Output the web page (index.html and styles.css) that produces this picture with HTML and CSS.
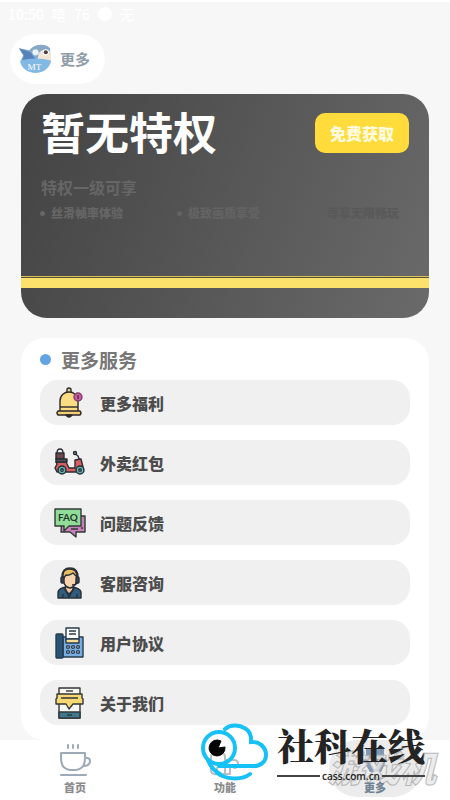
FILE: index.html
```html
<!DOCTYPE html>
<html lang="zh-CN">
<head>
  <meta charset="UTF-8" />
  <meta name="viewport" content="width=device-width, initial-scale=1" />
  <title>更多</title>
  <link rel="stylesheet" href="styles.css">
</head>
<body>
<div class="status-bar">
  <span>10:50</span>
  <span>嘻</span>
  <span>76</span>
  <span class="status-dot"></span>
  <span>无</span>
</div>

<header class="page-header">
  <h1 class="title-pill">
    <svg class="avatar" viewBox="0 0 32 32" aria-hidden="true">
      <path d="M0 5l10 2c5-6 15-7 20-2l1 14-14 3-15-5 2-5z" fill="#7fa9d6"/>
      <path d="M10 8c5-6 14-7 19-3l-9 3-4 4z" fill="#8ba6c0"/>
      <path d="M19 10c4-5 10-4 12 0v8c-5 3-10 2-13-2z" fill="#f3e5d3"/>
      <path d="M0 5l11 4 6 8-15 2 3-7z" fill="#5482b9"/>
      <circle cx="16" cy="9" r="3" fill="#e7f3fb"/>
      <circle cx="26" cy="9" r="3" fill="#fff"/>
      <circle cx="26" cy="9" r="2" fill="#493f3d"/>
      <path d="M1 17q15-4 30 0c-1 8-8 12-15 12S2 25 1 17z" fill="#82b8e4"/>
      <text x="15" y="26" class="avatar-text">MT</text>
    </svg>
    更多
  </h1>
</header>

<main>
  <section class="vip-card">
    <div class="vip-top">
      <h2>暂无特权</h2>
      <button type="button" class="get-btn">免费获取</button>
    </div>
    <p class="vip-level">特权一级可享</p>
    <ul class="perks">
      <li>丝滑帧率体验</li>
      <li>极致画质享受</li>
      <li>尊享无限畅玩</li>
    </ul>
    <div class="vip-stripe"></div>
  </section>

  <section class="services">
    <h2>更多服务</h2>
    <a class="service" href="#welfare">
      <svg viewBox="0 0 32 32" aria-hidden="true">
        <g stroke="#2c292c" stroke-width="1.4" stroke-linejoin="round">
          <path d="M13 5V2q2-2 4 0v3" fill="#e8d487"/>
          <path d="M6 25V14C6 2 24 2 24 14v11z" fill="#fbdc82"/>
          <path d="M6 20h18" fill="none"/>
          <path d="M4 24h22q2 2 0 4H4q-2-2 0-4z" fill="#f4cf72"/>
          <path d="M12 28q3 4 6 0z" fill="#2c292c"/>
          <circle cx="24" cy="10" r="4" fill="#c65a9f" stroke="#823d6d"/>
          <path d="M24 8v4" stroke="#5c2550"/>
        </g>
      </svg>
      更多福利
    </a>
    <a class="service" href="#takeout">
      <svg viewBox="0 0 32 32" aria-hidden="true">
        <g stroke="#2b2c33" stroke-width="1.4" stroke-linejoin="round">
          <path d="M2 12V6h8v6z" fill="#6d474c"/>
          <path d="M3 6q0-4 3-4t3 4M20 6l4 3 4 11M20 6l2-1" fill="none"/>
          <path d="M2 15h10l3 6h6V13l6-1 2 8-5 5H3l-2-4 2-4z" fill="#d95f62"/>
          <path d="M2 12h11v3H2z" fill="#4c5360"/>
          <circle cx="8" cy="23" r="4" fill="#58b9b7"/>
          <circle cx="26" cy="23" r="4" fill="#58b9b7"/>
          <circle cx="8" cy="23" r="1.2" fill="#d9eef0"/>
          <circle cx="26" cy="23" r="1.2" fill="#d9eef0"/>
          <circle cx="21" cy="6" r="1.5" fill="#58b9b7"/>
        </g>
      </svg>
      外卖红包
    </a>
    <a class="service" href="#feedback">
      <svg viewBox="0 0 32 32" aria-hidden="true">
        <g stroke="#303b34" stroke-width="1.4" stroke-linejoin="round">
          <path d="M8 9h23v16H22v5l-6-5H7z" fill="#ca7fbd"/>
          <path d="M1 2h26v17H15l-5 5v-5H1z" fill="#91dc99"/>
          <path d="M17 22h7M27 21h2" fill="none"/>
        </g>
        <text x="14" y="14" class="faq-text">FAQ</text>
      </svg>
      问题反馈
    </a>
    <a class="service" href="#support">
      <svg viewBox="0 0 32 32" aria-hidden="true">
        <g stroke="#292f36" stroke-width="1.4" stroke-linejoin="round">
          <path d="M4 31v-6q1-4 8-5h6q8 1 9 5v6z" fill="#315c7d"/>
          <path d="M12 19h7v4l-4 4-4-4z" fill="#f0c5a3"/>
          <path d="M9 10q0-8 7-8t7 8q0 10-7 11Q9 20 9 10z" fill="#f8d3ae"/>
          <path d="M9 12V8q0-6 7-6t7 8l-4-4q-4 3-7 2z" fill="#e9bd63"/>
          <path d="M8 10Q8 1 16 1t8 9v5q-2 3-6 3" fill="none"/>
          <rect x="7" y="10" width="3" height="6" rx="1" fill="#3b424b"/>
          <rect x="22" y="10" width="3" height="6" rx="1" fill="#3b424b"/>
          <path d="M11 21l4 9 5-9M9 27v4M23 27v4" fill="none"/>
        </g>
      </svg>
      客服咨询
    </a>
    <a class="service" href="#agreement">
      <svg viewBox="0 0 32 32" aria-hidden="true">
        <g stroke="#293b4d" stroke-width="1.4" stroke-linejoin="round">
          <path d="M9 10h20v20H9z" fill="#79addf"/>
          <path d="M12 1h13v11H12z" fill="#fff"/>
          <path d="M15 4h7M15 7h7" fill="none"/>
          <path d="M12 12h13v4H12z" fill="#f6df93"/>
          <rect x="2" y="7" width="7" height="24" rx="1" fill="#275573"/>
          <g fill="#d8eafa">
            <circle cx="14" cy="20" r="1.4"/><circle cx="19" cy="20" r="1.4"/><circle cx="24" cy="20" r="1.4"/>
            <circle cx="14" cy="25" r="1.4"/><circle cx="19" cy="25" r="1.4"/><circle cx="24" cy="25" r="1.4"/>
          </g>
        </g>
      </svg>
      用户协议
    </a>
    <a class="service" href="#about">
      <svg viewBox="0 0 32 32" aria-hidden="true">
        <g stroke="#343638" stroke-width="1.4" stroke-linejoin="round">
          <path d="M5 1h21v30H5z" fill="#f7f7f2"/>
          <path d="M5 25h21v6H5z" fill="#3e7990"/>
          <path d="M12 4h7" fill="none"/>
          <path d="M3 7h25v4l1 1v5H19l-4 5-3-5H2v-5l1-1z" fill="#f8d873"/>
          <path d="M7 11h17M13 28h5" fill="none"/>
        </g>
      </svg>
      关于我们
    </a>
  </section>
</main>

<nav class="tab-bar">
  <a class="tab" href="#home">
    <svg viewBox="0 0 36 36" aria-hidden="true">
      <g fill="none" stroke="#9daab8" stroke-width="2" stroke-linecap="round" stroke-linejoin="round">
        <path d="M11 2v3M16 2v3M21 2v3"/>
        <path d="M4 10h24v5q0 11-9 12h-6Q4 26 4 15zM28 15h2q3 0 3 3 0 5-7 5"/>
        <path d="M4 32h25"/>
      </g>
    </svg>
    <span>首页</span>
  </a>
  <a class="tab" href="#tools">
    <svg viewBox="0 0 36 36" aria-hidden="true">
      <g fill="none" stroke="#b8bec5" stroke-width="2" stroke-linecap="round">
        <path d="M8 31q-4 0-4-4V14q0-4 4-4h6q4 0 4 4v3h9q4 0 4 4t-4 4M8 31h15M10 30v-5q4-4 8 0v5M23 30v-5"/>
      </g>
    </svg>
    <span>功能</span>
  </a>
  <a class="tab active" href="#more" aria-current="page">
    <svg viewBox="0 0 36 36" aria-hidden="true">
      <path d="M9 5h18v8l3 4-6 12H13L6 17l3-4z" fill="#8398b3"/>
      <path d="M12 16l6 8 6-8" fill="none" stroke="#e2e8f0" stroke-width="3"/>
    </svg>
    <span>更多</span>
  </a>

  <div class="game-mark">游戏机</div>
  <div class="site-mark">
    <svg viewBox="0 0 70 60" aria-hidden="true">
      <g fill="none" stroke="#16c1f7" stroke-width="4" stroke-linecap="round">
        <path d="M26 7c8-7 24-3 26 8v5c8-1 15 5 15 13 0 7-6 11-12 11H20"/>
        <circle cx="20" cy="26" r="16"/>
        <path d="M18 51c8 6 24 8 33 1M9 38q3 9 12 14"/>
      </g>
      <path d="M19 26l7-1a8 8 0 1 1-4-6z" fill="#050505" stroke="#050505"/>
    </svg>
    <div class="site-text">
      <span class="site-name">社科在线</span>
      <span class="site-url">cass.com.cn</span>
    </div>
  </div>
</nav>
</body>
</html>
```

FILE: styles.css
```css
:root {
  --background: #f7f7f7;
  --row: #f0f0f0;
  --text-main: #4c4c4c;
  --text-secondary: #777;
  --yellow: #ffdc3b;
  --blue: #62a4e3;
}

* {
  box-sizing: border-box;
}

body {
  margin: 0;
  min-height: 100vh;
  display: flex;
  flex-direction: column;
  font-family: "Noto Sans CJK SC", sans-serif;
  font-weight: 900;
  background: var(--background);
  color: var(--text-main);
}

h1, h2, p, ul {
  margin: 0;
  padding: 0;
}

a {
  color: inherit;
  text-decoration: none;
}

.status-bar {
  display: flex;
  align-items: center;
  gap: 8px;
  height: 26px;
  padding-left: 8px;
  border-top: 2px solid #fff;
  font-size: 14px;
  font-weight: 500;
  color: #fff;
}

.status-dot {
  width: 14px;
  height: 14px;
  border-radius: 50%;
  background: #fff;
}

.page-header {
  padding: 8px 10px 10px;
}

.title-pill {
  display: flex;
  align-items: center;
  gap: 8px;
  width: fit-content;
  height: 50px;
  padding: 0 15px 0 9px;
  border-radius: 25px;
  background: #fff;
  color: #8f9ca9;
  font-size: 15px;
  line-height: 20px;
}

.avatar {
  width: 33px;
  height: 33px;
}

.avatar-text {
  font: 9px "Liberation Serif", serif;
  fill: #fff;
  text-anchor: middle;
}

.faq-text {
  font: 700 10px "Lato", sans-serif;
  fill: #26382b;
  text-anchor: middle;
}

main {
  flex: 1;
  display: flex;
  flex-direction: column;
  gap: 20px;
  padding: 0 21px;
}

.vip-card {
  display: flex;
  flex-direction: column;
  height: 224px;
  padding-bottom: 30px;
  border-radius: 26px;
  background: linear-gradient(110deg, #434343, #6a6a6a);
  color: #666;
}

.vip-top {
  display: flex;
  justify-content: space-between;
  align-items: center;
  height: 77px;
  padding: 0 20px;
}

.vip-top h2 {
  padding-bottom: 4px;
  font-size: 44px;
  line-height: 48px;
  color: #fff;
}

.get-btn {
  width: 94px;
  height: 40px;
  padding: 0;
  border: none;
  border-radius: 10px;
  background: var(--yellow);
  color: #fffbe0;
  font: inherit;
  font-size: 16px;
  cursor: pointer;
}

.vip-level {
  padding: 4px 20px;
  font-size: 16px;
  line-height: 24px;
  font-weight: 700;
}

.perks {
  display: grid;
  grid-template-columns: 137px 139px 1fr;
  padding: 0 19px;
  list-style: none;
  font-size: 12px;
  line-height: 20px;
}

.perks li {
  display: flex;
  align-items: center;
  gap: 6px;
}

.perks li::before {
  content: "";
  width: 5px;
  height: 5px;
  border-radius: 50%;
  background: currentColor;
}

.perks li:nth-child(2) {
  color: #636363;
}

.perks li:last-child {
  color: #595959;
}

.perks li:last-child::before {
  background: none;
}

.vip-stripe {
  height: 12px;
  margin-top: auto;
  border-top: 1px solid #d9c05c;
  background: linear-gradient(#5a5138 1px, #fce26a 1px);
}

.services {
  display: flex;
  flex-direction: column;
  gap: 15px;
  padding: 0 19px 15px;
  border-radius: 24px;
  background: #fff;
}

.services h2 {
  display: flex;
  align-items: center;
  gap: 10px;
  height: 42px;
  margin-bottom: -15px;
  color: var(--text-secondary);
  font-size: 19px;
}

.services h2::before {
  content: "";
  width: 11px;
  height: 11px;
  border-radius: 50%;
  background: var(--blue);
}

.service {
  display: flex;
  align-items: center;
  gap: 14px;
  height: 45px;
  padding: 0 14px;
  border-radius: 18px;
  background: var(--row);
  font-size: 16px;
  line-height: 20px;
}

.service svg {
  width: 32px;
  height: 32px;
}

.tab-bar {
  position: sticky;
  bottom: 0;
  display: grid;
  grid-template-columns: repeat(3, 1fr);
  justify-items: center;
  height: 60px;
  background: #fff;
}

.tab {
  display: flex;
  flex-direction: column;
  align-items: center;
  width: 92px;
  padding-top: 3px;
  color: #8b8b8b;
  font-size: 11px;
  line-height: 16px;
}

.tab svg {
  width: 36px;
  height: 36px;
}

.tab span {
  position: relative;
  z-index: 1;
}

.tab.active {
  height: 57px;
  border-radius: 28px;
  background: #ececec;
  color: #6f8291;
}

/* logos over the tab bar */
.game-mark {
  position: absolute;
  right: 14px;
  bottom: 16px;
  font-size: 36px;
  line-height: 36px;
  font-style: italic;
  color: #e8e8e8;
  -webkit-text-stroke: 1px #aaa;
  opacity: 0.8;
}

.site-mark {
  position: absolute;
  right: 25px;
  bottom: 18px;
  display: flex;
  align-items: flex-end;
  gap: 8px;
  color: #242424;
}

.site-mark svg {
  width: 70px;
  height: 60px;
}

.site-text {
  display: flex;
  flex-direction: column;
  gap: 4px;
}

.site-name {
  font-family: "Noto Serif CJK SC", "Noto Sans CJK SC", serif;
  font-size: 37px;
  line-height: 42px;
}

.site-url {
  display: flex;
  align-items: center;
  gap: 2px;
  font: 600 10px/12px "Open Sans", sans-serif;
}

.site-url::before,
.site-url::after {
  content: "";
  flex: 1;
  height: 2px;
  background: #444;
}
```
